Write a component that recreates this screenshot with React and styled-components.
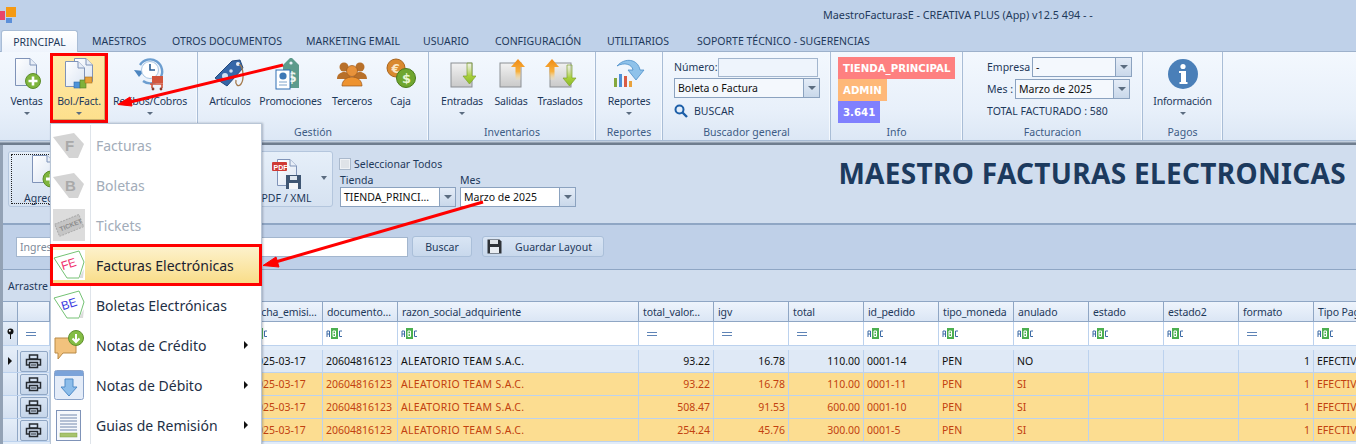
import styled, { createGlobalStyle } from "styled-components";

const GlobalStyle = createGlobalStyle`
  html, body {
    margin: 0;
    padding: 0;
    width: 1356px;
    height: 444px;
    overflow: hidden;
    background: #c0d2e9;
    font-family: "Noto Sans", "Liberation Sans", sans-serif;
    font-size: 11px;
    color: #1e395b;
  }
  * { box-sizing: border-box; }
`;

const Page = styled.div`
  position: relative;
  width: 1356px;
  height: 444px;
  overflow: hidden;
  display: flex;
  flex-direction: column;
`;

/* ---- title bar + tabs ---- */

const TitleBar = styled.div`
  height: 30px;
  flex: none;
  display: flex;
  align-items: center;
  background: #bfd1e9;
`;

const AppLogo = styled.svg`
  width: 17px;
  height: 17px;
  flex: none;
`;

const TitleText = styled.span`
  margin: 0 0 1px 806px;
  font-size: 10.8px;
  color: #1e395b;
  white-space: nowrap;
`;

const TabRow = styled.div`
  height: 22px;
  flex: none;
  display: flex;
  padding-left: 1px;
  background: #bfd1e9;
  border-bottom: 1px solid #9db1cb;
`;

const Tab = styled.div`
  width: ${(p) => p.$w}px;
  flex: none;
  height: ${(p) => (p.$active ? 22 : 21)}px;
  display: flex;
  align-items: center;
  justify-content: ${(p) => (p.$active ? "center" : "flex-start")};
  padding: 1px 0 0 ${(p) => (p.$active ? 0 : 14)}px;
  font-size: 10.5px;
  white-space: nowrap;
  ${(p) =>
    p.$active &&
    `
    background: linear-gradient(#ffffff, #eef4fc);
    border: 1px solid #a9bdd6;
    border-bottom: none;
    border-radius: 3px 3px 0 0;
  `}
`;

/* ---- ribbon ---- */

const Ribbon = styled.div`
  height: 89px;
  flex: none;
  display: flex;
  background: linear-gradient(#f3f8fe 0%, #e8f0fa 65%, #dce7f5 100%);
  border-bottom: 1px solid #a8bcd5;
`;

const Group = styled.div`
  width: ${(p) => p.$w}px;
  flex: none;
  display: flex;
  flex-direction: column;
  border-right: 1px solid #a9bdd6;
  box-shadow: inset -1px 0 0 #f5f9fe;
`;

const GroupBody = styled.div`
  height: 71px;
  flex: none;
  display: flex;
  padding: 1px 0 0 ${(p) => p.$pad || 0}px;
`;

const GroupCaption = styled.div`
  flex: 1;
  display: flex;
  align-items: center;
  justify-content: center;
  padding-top: 1px;
  color: #3d5c85;
  font-size: 10.5px;
`;

const BigButton = styled.div`
  width: ${(p) => p.$w}px;
  height: 70px;
  flex: none;
  display: flex;
  flex-direction: column;
  align-items: center;
  padding-top: 3px;
  white-space: nowrap;
  font-size: 10.5px;
  ${(p) =>
    p.$hot &&
    `
    background: linear-gradient(#ffe9a8, #fddf8b);
    outline: 3px solid #f00;
    outline-offset: -3px;
    box-shadow: inset -4px -4px 0 #c9b06c;
  `}
`;

const IconSlot = styled.div`
  height: 36px;
  flex: none;
  display: flex;
  align-items: center;
  justify-content: center;
`;

const BigLabel = styled.div`
  margin-top: 2px;
  line-height: 14px;
  letter-spacing: -0.2px;
`;

const Caret = styled.i`
  display: block;
  width: 0;
  height: 0;
  margin-top: 4px;
  border-left: 3px solid transparent;
  border-right: 3px solid transparent;
  border-top: 3px solid #5b6c80;
`;

const Stack = styled.div`
  display: flex;
  flex-direction: column;
  padding: ${(p) => p.$pad};
`;

const FieldRow = styled.div`
  display: flex;
  align-items: center;
  height: 22px;
  gap: ${(p) => p.$gap || 0}px;
  white-space: nowrap;
  font-size: 10.5px;
`;

const TextBox = styled.div`
  width: ${(p) => p.$w}px;
  height: 19px;
  flex: none;
  background: #eef4fc;
  border: 1px solid #a3b6ce;
`;

const Combo = styled.div`
  width: ${(p) => p.$w}px;
  height: 20px;
  flex: none;
  display: flex;
  background: ${(p) => p.$bg || "#f4f8fd"};
  border: 1px solid #8ba2bf;
  font-size: 10.5px;
  color: #111;
`;

const ComboText = styled.div`
  flex: 1;
  min-width: 0;
  display: flex;
  align-items: center;
  padding-left: 3px;
  white-space: nowrap;
  overflow: hidden;
`;

const ComboButton = styled.div`
  width: 16px;
  flex: none;
  display: flex;
  align-items: center;
  justify-content: center;
  background: linear-gradient(#e4ecf7, #c9d8ea);
  border-left: 1px solid #8ba2bf;
`;

const ComboCaret = styled.i`
  display: block;
  width: 0;
  height: 0;
  border-left: 4px solid transparent;
  border-right: 4px solid transparent;
  border-top: 4px solid #5b6c80;
`;

const BuscarLink = styled.div`
  display: flex;
  align-items: center;
  gap: 6px;
  height: 21px;
  margin-top: 2px;
  font-size: 10.5px;
`;

const InfoTag = styled.div`
  height: 22px;
  align-self: flex-start;
  display: flex;
  align-items: center;
  padding: 0 5px;
  background: ${(p) => p.$bg};
  color: #fff;
  font-family: "DejaVu Sans", sans-serif;
  font-weight: 700;
  font-size: 10.2px;
  white-space: nowrap;
`;

const Shade = styled.div`
  height: 4px;
  flex: none;
  background: linear-gradient(#d6e2f1, #6f7d8e 60%, #6f7d8e);
`;

/* ---- document area ---- */

const DocArea = styled.div`
  flex: 1;
  min-height: 0;
  display: flex;
  flex-direction: column;
  border-left: 3px solid #93a2b5;
  background: #d0ddee;
`;

const Toolbar = styled.div`
  height: 80px;
  flex: none;
  display: flex;
  padding: 6px 10px 0 5px;
  background: #d0ddee;
  border-bottom: 2px solid #8fa6c4;
`;

const ToolButton = styled.div`
  width: ${(p) => p.$w}px;
  margin-right: ${(p) => p.$mr || 0}px;
  height: 56px;
  flex: none;
  position: relative;
  display: flex;
  flex-direction: column;
  align-items: center;
  padding-top: 2px;
  background: linear-gradient(#e6eff9, #d6e2f1);
  border: 1px solid #b4c6dd;
  border-radius: 3px;
  color: #1e395b;
  font-size: 10.5px;
`;

const FocusBox = styled.div`
  position: absolute;
  inset: 2px;
  border: 1px dotted #222;
`;

const ToolLabel = styled.div`
  margin-top: 1px;
  line-height: 14px;
  white-space: nowrap;
`;

const SplitCaret = styled.i`
  position: absolute;
  right: 5px;
  top: 24px;
  width: 0;
  height: 0;
  border-left: 3.5px solid transparent;
  border-right: 3.5px solid transparent;
  border-top: 4px solid #5b6c80;
`;

const Filters = styled.div`
  display: flex;
  flex-direction: column;
  margin-left: 6px;
  padding-top: 4px;
`;

const CheckRow = styled.div`
  height: 17px;
  display: flex;
  align-items: center;
  gap: 3px;
  font-size: 10.5px;
`;

const CheckBox = styled.span`
  width: 12px;
  height: 12px;
  background: #dfe3e8;
  border: 1px solid #aab9cc;
  box-shadow: inset 0 0 0 1px #eef1f5;
`;

const ComboRow = styled.div`
  display: flex;
  gap: 4px;
  margin: 2px 0 0 1px;
`;

const LabeledCombo = styled.div`
  display: flex;
  flex-direction: column;
`;

const SmallLabel = styled.div`
  height: 13px;
  line-height: 13px;
  font-size: 10.5px;
`;

const PageTitle = styled.h1`
  margin: 6px 0 0 auto;
  font-family: "Noto Sans", sans-serif;
  font-weight: 700;
  font-size: 28px;
  line-height: 32px;
  letter-spacing: 0.32px;
  color: #1c3a5e;
  white-space: nowrap;
`;

const SearchBar = styled.div`
  height: 45px;
  flex: none;
  display: flex;
  align-items: center;
  padding: 0 0 1px 13px;
  background: #bfd0e8;
  border-bottom: 1px solid #8fa6c4;
`;

const SearchInput = styled.div`
  width: 392px;
  height: 20px;
  flex: none;
  margin-right: 4px;
  display: flex;
  align-items: center;
  padding-left: 3px;
  background: #fff;
  border: 1px solid #a3b6ce;
  color: #7d8a99;
  font-size: 10.5px;
`;

const FlatButton = styled.div`
  width: ${(p) => p.$w}px;
  height: 21px;
  margin-right: ${(p) => p.$mr || 0}px;
  flex: none;
  display: flex;
  align-items: center;
  justify-content: center;
  background: linear-gradient(#d9e5f4, #c8d8ec);
  border: 1px solid #aabfd9;
  border-radius: 3px;
  font-size: 10.5px;
`;

const SaveButton = styled(FlatButton)`
  justify-content: flex-start;
  padding-left: 4px;
  gap: 13px;
`;

const GroupPanel = styled.div`
  height: 32px;
  flex: none;
  display: flex;
  align-items: center;
  padding-left: 5px;
  background: #d0ddee;
  border-bottom: 1px solid #8fa6c4;
  font-size: 10.5px;
  white-space: nowrap;
`;

const GridWrap = styled.div`
  flex: 1;
  min-height: 0;
  background: #e2ecf8;
`;

const GridRow = styled.div`
  display: grid;
  grid-template-columns: 15px 32px 198px 75px 75px 241px repeat(9, 75px) 75px;
  height: ${(p) => p.$h}px;
  margin-bottom: ${(p) => p.$gap || 0}px;
  background: ${(p) => p.$bg || "transparent"};
  color: ${(p) => p.$fg || "#111"};
  border-bottom: 1px solid ${(p) => p.$line || "#bcd2ee"};
`;

const HeadCell = styled.div`
  display: flex;
  align-items: center;
  padding-left: 4px;
  overflow: hidden;
  white-space: nowrap;
  color: #1e395b;
  font-size: 10.5px;
  letter-spacing: -0.12px;
  background: linear-gradient(#eef4fc, #dbe6f5);
  border-right: 1px solid #8fa6c4;
`;

const FilterCell = styled.div`
  display: flex;
  align-items: center;
  padding-left: 3px;
  background: #fff;
  border-right: 1px solid #bcd2ee;
`;

const IndicatorCell = styled.div`
  display: flex;
  align-items: center;
  justify-content: center;
  background: linear-gradient(#e4edf8, #d5e1f1);
  border-right: 1px solid #8fa6c4;
`;

const Cell = styled.div`
  display: flex;
  align-items: center;
  justify-content: ${(p) => (p.$num ? "flex-end" : "flex-start")};
  padding: 0 3px;
  overflow: hidden;
  white-space: nowrap;
  font-size: 10.5px;
  border-right: 1px solid #bcd2ee;
`;

const NameCell = styled(Cell)`
  letter-spacing: 0.33px;
`;

const PrintCell = styled.div`
  display: flex;
  align-items: center;
  justify-content: center;
  background: #dfe9f6;
  border-right: 1px solid #bcd2ee;
`;

const PrintButton = styled.div`
  width: 28px;
  height: 21px;
  display: flex;
  align-items: center;
  justify-content: center;
  background: linear-gradient(#d9e5f4, #c6d6ea);
  border: 1px solid #8fa6c4;
  border-radius: 2px;
`;

const RowMark = styled.i`
  width: 0;
  height: 0;
  border-top: 4px solid transparent;
  border-bottom: 4px solid transparent;
  border-left: 4px solid #111;
`;

const EqualSign = styled.i`
  display: block;
  width: 10px;
  height: 4px;
  margin-left: 5px;
  border-top: 1px solid #5f84b6;
  border-bottom: 1px solid #5f84b6;
`;

/* ---- dropdown and annotations, both lie over the page ---- */

const Menu = styled.div`
  position: absolute;
  left: 50px;
  top: 123px;
  width: 212px;
  display: flex;
  flex-direction: column;
  padding-top: 1px;
  background: #fff;
  border: 1px solid #b9c6d6;
  border-bottom: none;
  box-shadow: 1px 0 2px rgba(60, 70, 90, 0.35);
`;

const MenuItem = styled.div`
  height: 40px;
  flex: none;
  display: flex;
  align-items: center;
  font-size: 14px;
  white-space: nowrap;
  color: ${(p) => (p.$off ? "#a2acb9" : "#1e2f45")};
  ${(p) =>
    p.$hot &&
    `
    background: linear-gradient(#fdf3d0, #f9dc85);
    outline: 3px solid #f00;
    outline-offset: -2px;
    color: #1a2230;
    position: relative;
  `}
`;

const MenuIcon = styled.div`
  width: 40px;
  height: 100%;
  flex: none;
  display: flex;
  align-items: center;
  justify-content: center;
  padding-right: 3px;
  border-right: 1px solid ${(p) => (p.$hot ? "transparent" : "#dfe4ea")};
`;

const MenuText = styled.span`
  margin-left: 5px;
  flex: 1;
`;

const SubArrow = styled.i`
  width: 0;
  height: 0;
  margin-right: 13px;
  border-top: 4px solid transparent;
  border-bottom: 4px solid transparent;
  border-left: 4px solid #111;
`;

const ArrowLayer = styled.svg`
  position: absolute;
  left: 0;
  top: 0;
  width: 1356px;
  height: 444px;
  pointer-events: none;
`;

/* ---- icons ---- */

function Sheet({ x = 0, y = 0, w = 20, h = 27 }) {
  return (
    <g transform={`translate(${x} ${y})`}>
      <path d={`M.5 .5H${w - 7}L${w - 0.5} 7V${h - 0.5}H.5Z`} fill="url(#sheet)" stroke="#7f93b8" />
      <path d={`M${w - 7} .5V7H${w - 0.5}`} fill="#e8eef7" stroke="#7f93b8" />
    </g>
  );
}

function VentasIcon() {
  return (
    <svg width="28" height="34" viewBox="0 0 28 34">
      <Sheet x={2} y={1} w={22} h={28} />
      <circle cx="20" cy="24" r="7.5" fill="#7eb53c" stroke="#5d8d2b" />
      <path d="M20 19.5v9M15.5 24h9" stroke="#fff" strokeWidth="2.6" />
    </svg>
  );
}

function BolFactIcon() {
  return (
    <svg width="30" height="34" viewBox="0 0 30 34">
      <Sheet x={10} y={1} w={19} h={24} />
      <Sheet x={1} y={4} w={20} h={26} />
      <rect x="10" y="25" width="6" height="6" fill="#4d93d9" stroke="#2f6aa8" strokeWidth=".6" />
      <rect x="16" y="23" width="6" height="8" fill="#7fb13a" stroke="#557d22" strokeWidth=".6" />
      <rect x="21" y="20" width="7" height="6" fill="#e8a13a" stroke="#a56f1d" strokeWidth=".6" />
    </svg>
  );
}

function RecibosIcon() {
  return (
    <svg width="34" height="34" viewBox="0 0 34 34">
      <path d="M7 8a12 12 0 1 1 3 16" fill="none" stroke="#6c9ed0" strokeWidth="2.4" />
      <path d="M1 13l5 7 5-6z" fill="#4c85c0" />
      <circle cx="17" cy="13" r="8.500" fill="#fff" stroke="#a9c6e3" />
      <path d="M17 7v6h5" fill="none" stroke="#2b5f96" strokeWidth="1.6" />
      <rect x="19" y="19" width="11" height="7" fill="#d2553d" />
      <path d="M17 27h13M19 27v4M29 27v4" stroke="#d2553d" strokeWidth="1.6" />
      <circle cx="20" cy="32" r="1.4" fill="#8a3a2c" />
      <circle cx="28" cy="32" r="1.4" fill="#8a3a2c" />
    </svg>
  );
}

function ArticulosIcon() {
  return (
    <svg width="34" height="34" viewBox="0 0 34 34">
      <path d="M2 21L19 4l8-1 3 8-16 18z" fill="#3567a8" stroke="#24497c" />
      <circle cx="25" cy="7" r="2" fill="#e7eef7" />
      <circle cx="12" cy="19" r="3" fill="#cfe0f3" />
      <circle cx="18" cy="14" r="1.8" fill="#cfe0f3" />
      <path d="M26 7c5 3 5 16 2 20s-6 0-5-4" fill="none" stroke="#a57a4c" strokeWidth="1.3" />
    </svg>
  );
}

function PromoIcon() {
  return (
    <svg width="32" height="34" viewBox="0 0 32 34">
      <path d="M8 8l7-7h2l7 7v23H8z" fill="#5d9b8c" />
      <circle cx="16" cy="6" r="1.6" fill="#eaf2f8" />
      <text x="12" y="25" fontFamily="DejaVu Sans" fontWeight="700" fontSize="14" fill="#eef6f3">$</text>
      <rect x="1" y="13" width="14" height="19" fill="#fff" stroke="#2f6fb3" />
      <circle cx="8" cy="19" r="3.6" fill="#3d78b6" />
      <path d="M4 25h8M4 28h8" stroke="#7ea4cb" />
    </svg>
  );
}

function TercerosIcon() {
  return (
    <svg width="30" height="30" viewBox="0 0 30 30">
      <g fill="#b8702a">
        <circle cx="7" cy="8" r="4.5" />
        <circle cx="23" cy="8" r="4.5" />
        <path d="M0 20c0-5 4-7 7-7s7 2 7 7zM16 20c0-5 4-7 7-7s7 2 7 7z" />
      </g>
      <circle cx="15" cy="12" r="5.5" fill="#e8923a" stroke="#9a561a" strokeWidth=".7" />
      <path d="M5 27c0-6 5-9 10-9s10 3 10 9z" fill="#ee9330" stroke="#9a561a" strokeWidth=".7" />
    </svg>
  );
}

function CajaIcon() {
  return (
    <svg width="30" height="32" viewBox="0 0 30 32">
      <circle cx="10" cy="10" r="9" fill="#d9892f" stroke="#a9641c" />
      <text x="5.5" y="14.5" fontFamily="DejaVu Sans" fontWeight="700" fontSize="12" fill="#fbe7c6">€</text>
      <circle cx="20" cy="20" r="9.5" fill="#6fa62f" stroke="#4a7a1b" />
      <text x="16" y="25" fontFamily="DejaVu Sans" fontWeight="700" fontSize="13" fill="#e8f5d0">$</text>
    </svg>
  );
}

function BoxSheet({ x, y }) {
  return <rect x={x} y={y} width="21" height="24" fill="url(#box)" stroke="#8b8f94" />;
}

function GreenDown({ x, y }) {
  return (
    <g transform={`translate(${x} ${y})`}>
      <path d="M4 0h5v13h4l-6.5 8L0 13h4z" fill="url(#green)" stroke="#7ea22e" strokeWidth=".7" />
    </g>
  );
}

function OrangeUp({ x, y }) {
  return (
    <g transform={`translate(${x} ${y})`}>
      <path d="M7 0l7 8H9.5v13h-5V8H0z" fill="url(#orange)" />
    </g>
  );
}

function EntradasIcon() {
  return (
    <svg width="28" height="30" viewBox="0 0 28 30">
      <BoxSheet x={3} y={4} />
      <GreenDown x={15} y={4} />
    </svg>
  );
}

function SalidasIcon() {
  return (
    <svg width="28" height="30" viewBox="0 0 28 30">
      <BoxSheet x={3} y={4} />
      <OrangeUp x={14} y={0} />
    </svg>
  );
}

function TrasladosIcon() {
  return (
    <svg width="34" height="30" viewBox="0 0 34 30">
      <BoxSheet x={7} y={4} />
      <OrangeUp x={2} y={0} />
      <GreenDown x={20} y={6} />
    </svg>
  );
}

function ReportesIcon() {
  return (
    <svg width="34" height="32" viewBox="0 0 34 32">
      <path d="M5 8c8-9 21-7 23 4h4l-8 10-8-10h5C20 6 12 4 5 8z" fill="#8fc2ea" stroke="#4d8fc9" strokeWidth=".8" />
      <rect x="2" y="20" width="3" height="9" fill="#84a83e" />
      <rect x="7" y="16" width="3" height="13" fill="#4c8fd6" />
      <rect x="12" y="18" width="3" height="11" fill="#d95c45" />
      <rect x="17" y="23" width="3" height="6" fill="#e9a23c" />
    </svg>
  );
}

function InfoIcon() {
  return (
    <svg width="30" height="30" viewBox="0 0 30 30">
      <circle cx="15" cy="15" r="15" fill="#4a7fb8" />
      <circle cx="15" cy="7.5" r="2.6" fill="#fff" />
      <path d="M11 12h7v11h1.500v2h-8v-2h1.500v-9h-2z" fill="#fff" />
    </svg>
  );
}

function MagnifierIcon() {
  return (
    <svg width="14" height="14" viewBox="0 0 14 14">
      <circle cx="5.500" cy="5.500" r="4" fill="#e3eefa" stroke="#1d5fa8" strokeWidth="2" />
      <path d="M8.500 8.500l4.500 4.500" stroke="#1d5fa8" strokeWidth="2.4" />
    </svg>
  );
}

function AgregarIcon() {
  return (
    <svg width="34" height="36" viewBox="-4 0 34 36">
      <Sheet x={1} y={1} w={22} h={28} />
      <circle cx="20" cy="25" r="8" fill="#7eb53c" stroke="#5d8d2b" />
      <path d="M20 20v10M15 25h10" stroke="#fff" strokeWidth="2.8" />
    </svg>
  );
}

function PdfIcon() {
  return (
    <svg width="30" height="36" viewBox="0 -4 30 36">
      <Sheet x={5} y={1} w={20} h={27} />
      <rect x="0" y="4" width="15" height="9" rx="1" fill="#cf3a34" />
      <text x="1.500" y="11.500" fontFamily="Liberation Sans" fontWeight="700" fontSize="7" fill="#fff">PDF</text>
      <rect x="14" y="17" width="15" height="14" fill="#3f5673" />
      <rect x="18" y="18" width="7" height="4" fill="#dfe7f0" />
      <rect x="17" y="25" width="9" height="6" fill="#f4f6f9" />
    </svg>
  );
}

function FloppyIcon() {
  return (
    <svg width="15" height="15" viewBox="0 0 15 15">
      <path d="M.5 .5h12l2 2v12H.5z" fill="#2f3338" />
      <rect x="3" y="1" width="8" height="4" fill="#dfe3e8" />
      <rect x="3" y="8" width="9" height="6" fill="#e9edf2" />
    </svg>
  );
}

function PrintIcon() {
  return (
    <svg width="17" height="15" viewBox="0 0 17 15" fill="none" stroke="#262b31" strokeWidth="1.500">
      <rect x="4.500" y="1" width="8" height="4" />
      <path d="M4 11H1.500V5.500h14V11H13" />
      <rect x="4.500" y="8.500" width="8" height="5" />
      <path d="M6 11h5" strokeWidth="1" />
    </svg>
  );
}

function PinIcon() {
  return (
    <svg width="7" height="11" viewBox="0 0 7 11">
      <circle cx="3.500" cy="3.500" r="3" fill="#111" />
      <circle cx="2.800" cy="2.800" r="1" fill="#fff" />
      <path d="M3.500 6v5" stroke="#111" />
    </svg>
  );
}

function AbcIcon() {
  return (
    <svg width="17" height="11" viewBox="0 0 17 11">
      <rect x="5" y="0" width="7" height="11" fill="#4caf50" />
      <g fill="none" strokeWidth="1">
        <path d="M1 9V3h2.500v6M1 6h2.500" stroke="#3d6aa5" />
        <path d="M7 3h2.500v5.500H7zM7 5.700h2.500" stroke="#fff" />
        <path d="M16 3h-2.500v5.500H16" stroke="#3d6aa5" />
      </g>
    </svg>
  );
}

function GrayTag({ letter }) {
  return (
    <svg width="32" height="27" viewBox="0 0 32 27">
      <path d="M0 5L21 1l10 11-6 14h-9z" fill="#d4d4d4" />
      <text x="12" y="19" fontFamily="Liberation Sans" fontSize="15" fontWeight="700" fill="#a9a9a9">{letter}</text>
    </svg>
  );
}

function PaperTag({ letter, color }) {
  return (
    <svg width="32" height="30" viewBox="0 0 32 30">
      <rect width="32" height="30" fill="#fff" />
      <path d="M1 8L26 1l5 11-5 16H14z" fill="#fff" stroke="#74c274" />
      <path d="M26 28l5-9-1 9z" fill="#dcdcdc" />
      <text
        x="8"
        y="18"
        fontFamily="Liberation Sans"
        fontSize="12"
        fill={color}
        transform="rotate(-18 16 14)"
      >
        {letter}
      </text>
    </svg>
  );
}

function TicketIcon() {
  return (
    <svg width="32" height="32" viewBox="0 0 32 32">
      <rect width="32" height="32" fill="#dcdcdc" />
      <g transform="rotate(-22 16 16)">
        <rect x="3" y="10" width="26" height="13" fill="#c5c5c5" stroke="#aaa" strokeDasharray="2 1" />
        <text x="6" y="19" fontFamily="Liberation Sans" fontSize="6.500" fontWeight="700" fill="#8c8c8c">TICKET</text>
      </g>
    </svg>
  );
}

function CreditIcon() {
  return (
    <svg width="30" height="30" viewBox="0 0 30 30">
      <path d="M1 8h21v15H9l-5 6v-6H1z" fill="#f2c27d" stroke="#b98a46" />
      <circle cx="22" cy="8" r="7.500" fill="#84bd45" stroke="#5f8f2c" />
      <path d="M22 4v7M18.500 8.500L22 12l3.500-3.500" fill="none" stroke="#fff" strokeWidth="2" />
    </svg>
  );
}

function DebitIcon() {
  return (
    <svg width="30" height="30" viewBox="0 0 30 30">
      <rect x=".5" y=".5" width="29" height="29" rx="2" fill="#e4ecf8" stroke="#8aa3c9" />
      <rect x="1" y="1" width="28" height="5" fill="#7ba3d9" />
      <path d="M11 9h8v8h4l-8 9-8-9h4z" fill="#8cbdea" stroke="#4e8bc7" />
    </svg>
  );
}

function GuiaIcon() {
  return (
    <svg width="26" height="31" viewBox="0 0 26 31">
      <rect x=".5" y=".5" width="24" height="30" fill="#f6f8fc" stroke="#7f93b8" />
      <path d="M4 5h17M4 8h17M4 11h17M4 14h17M4 17h17M4 20h17" stroke="#7288ad" />
      <rect x="4" y="23" width="17" height="4" fill="#a7c36b" stroke="#7f9f46" strokeWidth=".5" />
    </svg>
  );
}

/* ---- data ---- */

const tabs = [
  ["MAESTROS", 80],
  ["OTROS DOCUMENTOS", 134],
  ["MARKETING EMAIL", 117],
  ["USUARIO", 72],
  ["CONFIGURACIÓN", 112],
  ["UTILITARIOS", 90],
  ["SOPORTE TÉCNICO - SUGERENCIAS", 220],
];

const headers = [
  ["fecha_emisi…", 0],
  ["documento…", 0],
  ["razon_social_adquiriente", 0],
  ["total_valor…", 1],
  ["igv", 1],
  ["total", 1],
  ["id_pedido", 0],
  ["tipo_moneda", 0],
  ["anulado", 0],
  ["estado", 0],
  ["estado2", 0],
  ["formato", 1],
  ["Tipo Pago", 0],
];

const rows = [
  ["93.22", "16.78", "110.00", "0001-14", "NO"],
  ["93.22", "16.78", "110.00", "0001-11", "SI"],
  ["508.47", "91.53", "600.00", "0001-10", "SI"],
  ["254.24", "45.76", "300.00", "0001-5", "SI"],
];

const menuItems = [
  { text: "Facturas", off: true, icon: <GrayTag letter="F" /> },
  { text: "Boletas", off: true, icon: <GrayTag letter="B" /> },
  { text: "Tickets", off: true, icon: <TicketIcon /> },
  { text: "Facturas Electrónicas", hot: true, icon: <PaperTag letter="FE" color="#f0306e" /> },
  { text: "Boletas Electrónicas", icon: <PaperTag letter="BE" color="#3a3ae0" /> },
  { text: "Notas de Crédito", sub: true, icon: <CreditIcon /> },
  { text: "Notas de Débito", sub: true, icon: <DebitIcon /> },
  { text: "Guias de Remisión", sub: true, icon: <GuiaIcon /> },
];

function BigBtn({ w, icon, label, caret, hot }) {
  return (
    <BigButton $w={w} $hot={hot}>
      <IconSlot>{icon}</IconSlot>
      <BigLabel>{label}</BigLabel>
      {caret && <Caret />}
    </BigButton>
  );
}

export default function App() {
  return (
    <Page>
      <GlobalStyle />
      <svg width="0" height="0" style={{ position: "absolute" }}>
        <defs>
          <linearGradient id="sheet" x1="0" y1="0" x2="1" y2="1">
            <stop offset="0" stopColor="#ffffff" />
            <stop offset="1" stopColor="#dbe5f3" />
          </linearGradient>
          <linearGradient id="box" x1="0" y1="0" x2="0" y2="1">
            <stop offset="0" stopColor="#f2f2f2" />
            <stop offset="1" stopColor="#c9c9c9" />
          </linearGradient>
          <linearGradient id="green" x1="0" y1="0" x2="0" y2="1">
            <stop offset="0" stopColor="#e3f0b8" stopOpacity=".2" />
            <stop offset=".6" stopColor="#a9d13c" />
            <stop offset="1" stopColor="#8dbb2b" />
          </linearGradient>
          <linearGradient id="orange" x1="0" y1="0" x2="0" y2="1">
            <stop offset="0" stopColor="#f08a13" />
            <stop offset=".6" stopColor="#f7b03d" />
            <stop offset="1" stopColor="#fbe3a6" stopOpacity=".2" />
          </linearGradient>
        </defs>
      </svg>

      <TitleBar>
        <AppLogo viewBox="0 0 17 17">
          <rect x="6" y="0" width="10" height="10" fill="#f59a13" />
          <rect x="0" y="4" width="5" height="9" fill="#e8456b" />
          <rect x="6" y="11" width="6" height="5" fill="#5b8fd9" />
        </AppLogo>
        <TitleText>MaestroFacturasE - CREATIVA PLUS (App) v12.5 494 - -</TitleText>
      </TitleBar>

      <TabRow>
        <Tab $active $w={77}>PRINCIPAL</Tab>
        {tabs.map(([name, w]) => (
          <Tab key={name} $w={w}>{name}</Tab>
        ))}
      </TabRow>

      <Ribbon>
        <Group $w={198}>
          <GroupBody $pad={3}>
            <BigBtn w={47} label="Ventas" caret icon={<VentasIcon />} />
            <BigBtn w={58} label="Bol./Fact." caret hot icon={<BolFactIcon />} />
            <BigBtn w={84} label="Recibos/Cobros" caret icon={<RecibosIcon />} />
          </GroupBody>
          <GroupCaption />
        </Group>
        <Group $w={231}>
          <GroupBody $pad={3}>
            <BigBtn w={58} label="Artículos" icon={<ArticulosIcon />} />
            <BigBtn w={63} label="Promociones" icon={<PromoIcon />} />
            <BigBtn w={60} label="Terceros" icon={<TercerosIcon />} />
            <BigBtn w={37} label="Caja" icon={<CajaIcon />} />
          </GroupBody>
          <GroupCaption>Gestión</GroupCaption>
        </Group>
        <Group $w={167}>
          <GroupBody $pad={6}>
            <BigBtn w={54} label="Entradas" caret icon={<EntradasIcon />} />
            <BigBtn w={44} label="Salidas" icon={<SalidasIcon />} />
            <BigBtn w={54} label="Traslados" icon={<TrasladosIcon />} />
          </GroupBody>
          <GroupCaption>Inventarios</GroupCaption>
        </Group>
        <Group $w={67}>
          <GroupBody $pad={6}>
            <BigBtn w={54} label="Reportes" caret icon={<ReportesIcon />} />
          </GroupBody>
          <GroupCaption>Reportes</GroupCaption>
        </Group>
        <Group $w={168}>
          <GroupBody>
            <Stack $pad="3px 0 0 11px">
              <FieldRow>
                Número:
                <TextBox $w={100} />
              </FieldRow>
              <Combo $w={146}>
                <ComboText>Boleta o Factura</ComboText>
                <ComboButton><ComboCaret /></ComboButton>
              </Combo>
              <BuscarLink>
                <MagnifierIcon />
                BUSCAR
              </BuscarLink>
            </Stack>
          </GroupBody>
          <GroupCaption>Buscador general</GroupCaption>
        </Group>
        <Group $w={132}>
          <GroupBody>
            <Stack $pad="4px 0 0 7px">
              <InfoTag $bg="#fe8080">TIENDA_PRINCIPAL</InfoTag>
              <InfoTag $bg="#feb878">ADMIN</InfoTag>
              <InfoTag $bg="#8080fe">3.641</InfoTag>
            </Stack>
          </GroupBody>
          <GroupCaption>Info</GroupCaption>
        </Group>
        <Group $w={180}>
          <GroupBody>
            <Stack $pad="3px 0 0 24px">
              <FieldRow $gap={2}>
                Empresa
                <Combo $w={100}>
                  <ComboText>-</ComboText>
                  <ComboButton><ComboCaret /></ComboButton>
                </Combo>
              </FieldRow>
              <FieldRow $gap={2}>
                Mes :
                <Combo $w={115}>
                  <ComboText>Marzo de 2025</ComboText>
                  <ComboButton><ComboCaret /></ComboButton>
                </Combo>
              </FieldRow>
              <FieldRow>TOTAL FACTURADO : 580</FieldRow>
            </Stack>
          </GroupBody>
          <GroupCaption>Facturacion</GroupCaption>
        </Group>
        <Group $w={80}>
          <GroupBody $pad={7}>
            <BigBtn w={65} label="Información" caret icon={<InfoIcon />} />
          </GroupBody>
          <GroupCaption>Pagos</GroupCaption>
        </Group>
      </Ribbon>

      <Shade />

      <DocArea>
        <Toolbar>
          <ToolButton $w={72} $mr={160}>
            <FocusBox />
            <AgregarIcon />
            <ToolLabel>Agregar</ToolLabel>
          </ToolButton>
          <ToolButton $w={93}>
            <PdfIcon />
            <ToolLabel>PDF / XML</ToolLabel>
            <SplitCaret />
          </ToolButton>
          <Filters>
            <CheckRow>
              <CheckBox />
              Seleccionar Todos
            </CheckRow>
            <ComboRow>
              <LabeledCombo>
                <SmallLabel>Tienda</SmallLabel>
                <Combo $w={116} $bg="#fff">
                  <ComboText>TIENDA_PRINCI...</ComboText>
                  <ComboButton><ComboCaret /></ComboButton>
                </Combo>
              </LabeledCombo>
              <LabeledCombo>
                <SmallLabel>Mes</SmallLabel>
                <Combo $w={116} $bg="#fff">
                  <ComboText>Marzo de 2025</ComboText>
                  <ComboButton><ComboCaret /></ComboButton>
                </Combo>
              </LabeledCombo>
            </ComboRow>
          </Filters>
          <PageTitle>MAESTRO FACTURAS ELECTRONICAS</PageTitle>
        </Toolbar>

        <SearchBar>
          <SearchInput>Ingrese texto a buscar</SearchInput>
          <FlatButton $w={60} $mr={10}>Buscar</FlatButton>
          <SaveButton $w={122}>
            <FloppyIcon />
            Guardar Layout
          </SaveButton>
        </SearchBar>

        <GroupPanel>Arrastre aquí el encabezado de una columna</GroupPanel>

        <GridWrap>
          <GridRow $h={20} $line="#8fa6c4">
            <IndicatorCell />
            <HeadCell />
            <HeadCell />
            {headers.map(([name]) => (
              <HeadCell key={name}>{name}</HeadCell>
            ))}
          </GridRow>
          <GridRow $h={24} $gap={4} $line="#bcd2ee">
            <IndicatorCell><PinIcon /></IndicatorCell>
            <FilterCell><EqualSign /></FilterCell>
            <FilterCell />
            {headers.map(([name, num]) => (
              <FilterCell key={name}>{num ? <EqualSign /> : <AbcIcon />}</FilterCell>
            ))}
          </GridRow>
          {rows.map((r, i) => {
            const anulado = r[4] === "SI";
            return (
              <GridRow
                key={r[3]}
                $h={23}
                $bg={anulado ? "#fcdd91" : "#dfe9f6"}
                $fg={anulado ? "#c2410f" : "#111"}
              >
                <IndicatorCell>{i === 0 && <RowMark />}</IndicatorCell>
                <PrintCell><PrintButton><PrintIcon /></PrintButton></PrintCell>
                <Cell />
                <Cell>2025-03-17</Cell>
                <Cell>20604816123</Cell>
                <NameCell>ALEATORIO TEAM S.A.C.</NameCell>
                <Cell $num>{r[0]}</Cell>
                <Cell $num>{r[1]}</Cell>
                <Cell $num>{r[2]}</Cell>
                <Cell>{r[3]}</Cell>
                <Cell>PEN</Cell>
                <Cell>{r[4]}</Cell>
                <Cell />
                <Cell />
                <Cell $num>1</Cell>
                <Cell>EFECTIVO</Cell>
              </GridRow>
            );
          })}
        </GridWrap>
      </DocArea>

      <Menu>
        {menuItems.map((m) => (
          <MenuItem key={m.text} $off={m.off} $hot={m.hot}>
            <MenuIcon $hot={m.hot}>{m.icon}</MenuIcon>
            <MenuText>{m.text}</MenuText>
            {m.sub && <SubArrow />}
          </MenuItem>
        ))}
      </Menu>

      <ArrowLayer viewBox="0 0 1356 444">
        <g stroke="#f00" strokeWidth="3" fill="#f00">
          <path d="M283 65L126 103" />
          <path d="M118 104.500L130 97l2 9z" strokeWidth="1" />
          <path d="M483 202L272 263" />
          <path d="M263 265.500L276 257l3 10z" strokeWidth="1" />
        </g>
      </ArrowLayer>
    </Page>
  );
}
